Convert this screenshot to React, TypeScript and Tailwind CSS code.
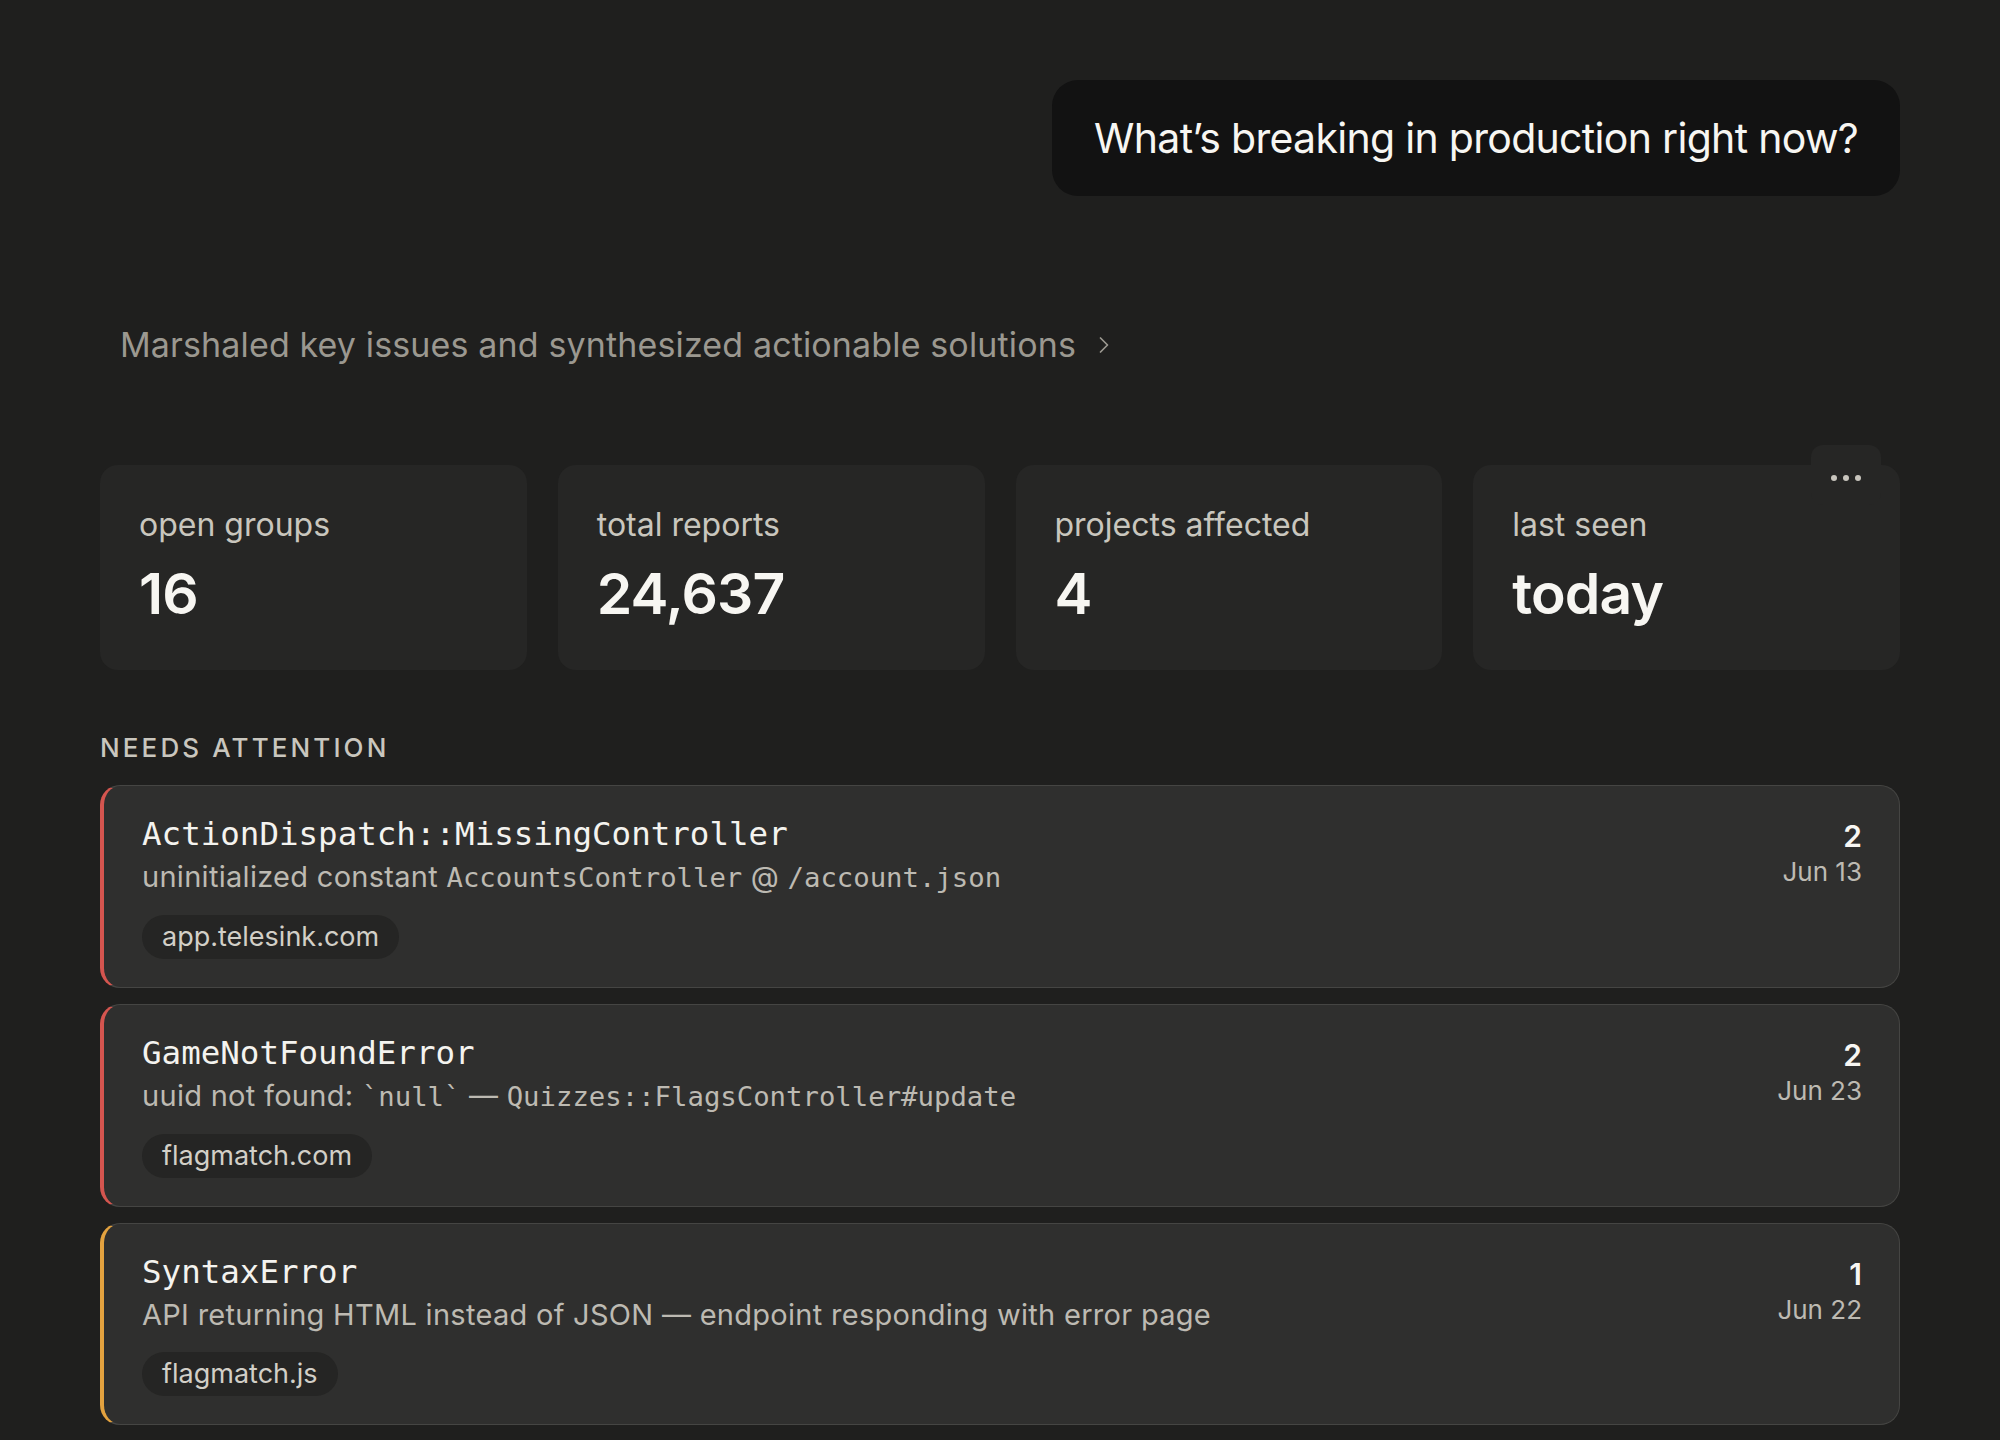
import React from "react";
import { ChevronRight } from "lucide-react";

const SANS = "font-['Inter','Noto_Sans',sans-serif]";
const MONO = "font-['DejaVu_Sans_Mono','Liberation_Mono',monospace]";

function Stat({ label, value, menu }: { label: string; value: string; menu?: boolean }) {
  return (
    <div className="relative rounded-[18px] bg-[#262625] px-[39px] pt-[40px] pb-[44px]">
      {menu && (
        <div className="absolute right-[19px] top-[-20px] flex h-[60px] w-[70px] items-start justify-center rounded-[12px] bg-[#262625] pt-[30px]">
          <div className="flex gap-[6px]">
            <span className="h-[6px] w-[6px] rounded-full bg-[#c8c5bd]" />
            <span className="h-[6px] w-[6px] rounded-full bg-[#c8c5bd]" />
            <span className="h-[6px] w-[6px] rounded-full bg-[#c8c5bd]" />
          </div>
        </div>
      )}
      <div className="relative text-[32px] leading-[40px] text-[#c9c6be]">{label}</div>
      <div className="relative mt-[17px] text-[57px] font-semibold leading-[64px] tracking-[-0.015em] text-[#f7f6f2]">
        {value}
      </div>
    </div>
  );
}

function Issue({
  title,
  sub,
  tag,
  count,
  date,
  color,
}: {
  title: string;
  sub: React.ReactNode;
  tag: string;
  count: string;
  date: string;
  color: "red" | "orange";
}) {
  return (
    <div
      className={
        "flex justify-between rounded-[20px] border border-[#454543] border-l-4 bg-[#2f2f2e] pl-[38px] pr-[37px] pt-[28px] pb-[28px] " +
        (color === "red" ? "border-l-[#d4554f]" : "border-l-[#e3a23f]")
      }
    >
      <div className="flex flex-col items-start">
        <div className={MONO + " text-[32.5px] leading-[40px] text-[#f4f3ef]"}>{title}</div>
        <div className="mt-[5px] text-[29px] leading-[36px] tracking-[0.01em] text-[#bdbab2]">{sub}</div>
        <div className="mt-[19px] flex h-[44px] items-center rounded-full bg-[#252524] px-[20px] text-[27px] text-[#d2cfc7]">
          {tag}
        </div>
      </div>
      <div className="flex flex-col items-end">
        <div className="mt-[4px] text-[30px] font-semibold leading-[36px] text-[#f7f6f2]">{count}</div>
        <div className="mt-[2px] text-[26px] leading-[32px] text-[#bdbab2]">{date}</div>
      </div>
    </div>
  );
}

const M = ({ children }: { children: React.ReactNode }) => (
  <span className={MONO + " text-[27.3px] tracking-normal"}>{children}</span>
);

export default function App() {
  return (
    <div className={SANS + " h-[1440px] overflow-hidden bg-[#1f1f1e] px-[100px] pt-[80px]"}>
      <div className="flex justify-end">
        <div className="rounded-[26px] bg-[#121212] px-[42px] py-[34px] text-[41px] leading-[48px] tracking-[-0.017em] text-[#f7f6f2]">
          What’s breaking in production right now?
        </div>
      </div>

      <div className="mt-[129px] flex items-center pl-[20px] text-[34px] leading-[40px] tracking-[0.004em] text-[#9b9890]">
        <span>Marshaled key issues and synthesized actionable solutions</span>
        <ChevronRight className="ml-[14px] h-[28px] w-[28px]" strokeWidth={1.5} />
      </div>

      <div className="mt-[100px] grid grid-cols-4 gap-[31px]">
        <Stat label="open groups" value="16" />
        <Stat label="total reports" value="24,637" />
        <Stat label="projects affected" value="4" />
        <Stat label="last seen" value="today" menu />
      </div>

      <div className="mt-[62px] text-[26px] font-medium leading-[32px] tracking-[0.12em] text-[#c9c6be]">
        NEEDS ATTENTION
      </div>

      <div className="mt-[21px] flex flex-col gap-[16px]">
        <Issue
          title="ActionDispatch::MissingController"
          sub={
            <>
              uninitialized constant <M>AccountsController</M> @ <M>/account.json</M>
            </>
          }
          tag="app.telesink.com"
          count="2"
          date="Jun 13"
          color="red"
        />
        <Issue
          title="GameNotFoundError"
          sub={
            <>
              uuid not found: <M>`null`</M> — <M>Quizzes::FlagsController#update</M>
            </>
          }
          tag="flagmatch.com"
          count="2"
          date="Jun 23"
          color="red"
        />
        <Issue
          title="SyntaxError"
          sub={<>API returning HTML instead of JSON — endpoint responding with error page</>}
          tag="flagmatch.js"
          count="1"
          date="Jun 22"
          color="orange"
        />
        <div className="h-[202px] rounded-[20px] border border-[#454543] border-l-4 border-l-[#e3a23f] bg-[#2f2f2e]" />
      </div>
    </div>
  );
}
